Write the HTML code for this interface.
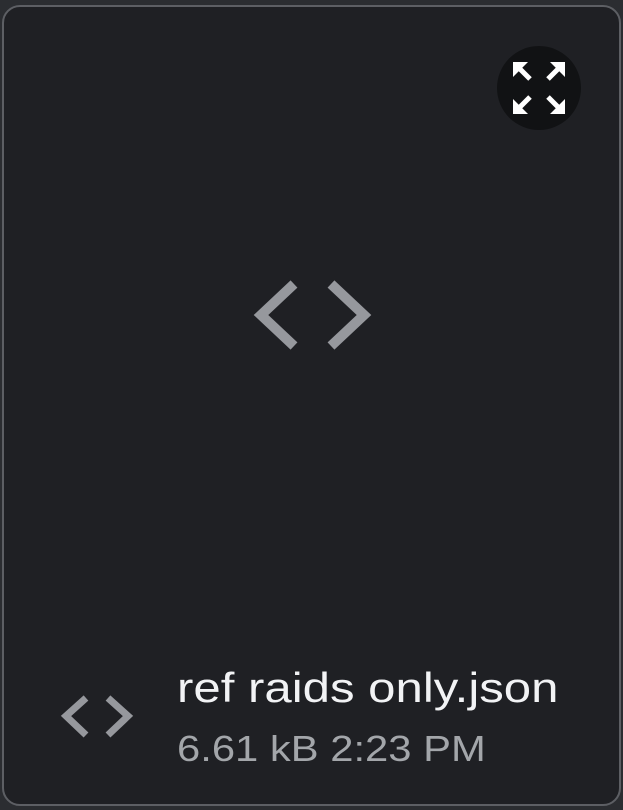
<!DOCTYPE html>
<html><head><style>
html,body{margin:0;padding:0;background:#2b2d31;width:623px;height:810px;overflow:hidden}
.card{position:absolute;left:2px;top:5px;width:615px;height:797px;border:2px solid #5d5f64;border-radius:18px;background:#1f2024}
.t1{position:absolute;left:177px;top:664px;font:42px "Liberation Sans",sans-serif;color:#f2f3f5;white-space:nowrap;transform:scaleX(1.17);transform-origin:0 0}
.t2{position:absolute;left:177px;top:728px;font:36px "Liberation Sans",sans-serif;color:#a3a6aa;white-space:nowrap;transform:scaleX(1.16);transform-origin:0 0}
</style></head><body>
<div class="card"></div>
<svg width="623" height="810" style="position:absolute;left:0;top:0">
<g stroke="#96989d" stroke-width="10" fill="none">
<polyline points="294,284 261,315 294,346"/>
<polyline points="331,284 364,315 331,346"/>
</g>
<g stroke="#96989d" stroke-width="7" fill="none">
<polyline points="86,698 66,716 86,735"/>
<polyline points="108,698 128,716 108,735"/>
</g>
<circle cx="539" cy="88" r="42" fill="#111214"/>
<g stroke="#fff" stroke-width="5" fill="#fff">
<line x1="516" y1="65" x2="530" y2="79"/><polygon points="513,62 528,62 513,77" stroke="none"/>
<line x1="562" y1="65" x2="548" y2="79"/><polygon points="565,62 550,62 565,77" stroke="none"/>
<line x1="516" y1="111" x2="530" y2="97"/><polygon points="513,114 528,114 513,99" stroke="none"/>
<line x1="562" y1="111" x2="548" y2="97"/><polygon points="565,114 550,114 565,99" stroke="none"/>
</g>
</svg>
<div class="t1">ref raids only.json</div>
<div class="t2">6.61 kB 2:23 PM</div>
</body></html>
